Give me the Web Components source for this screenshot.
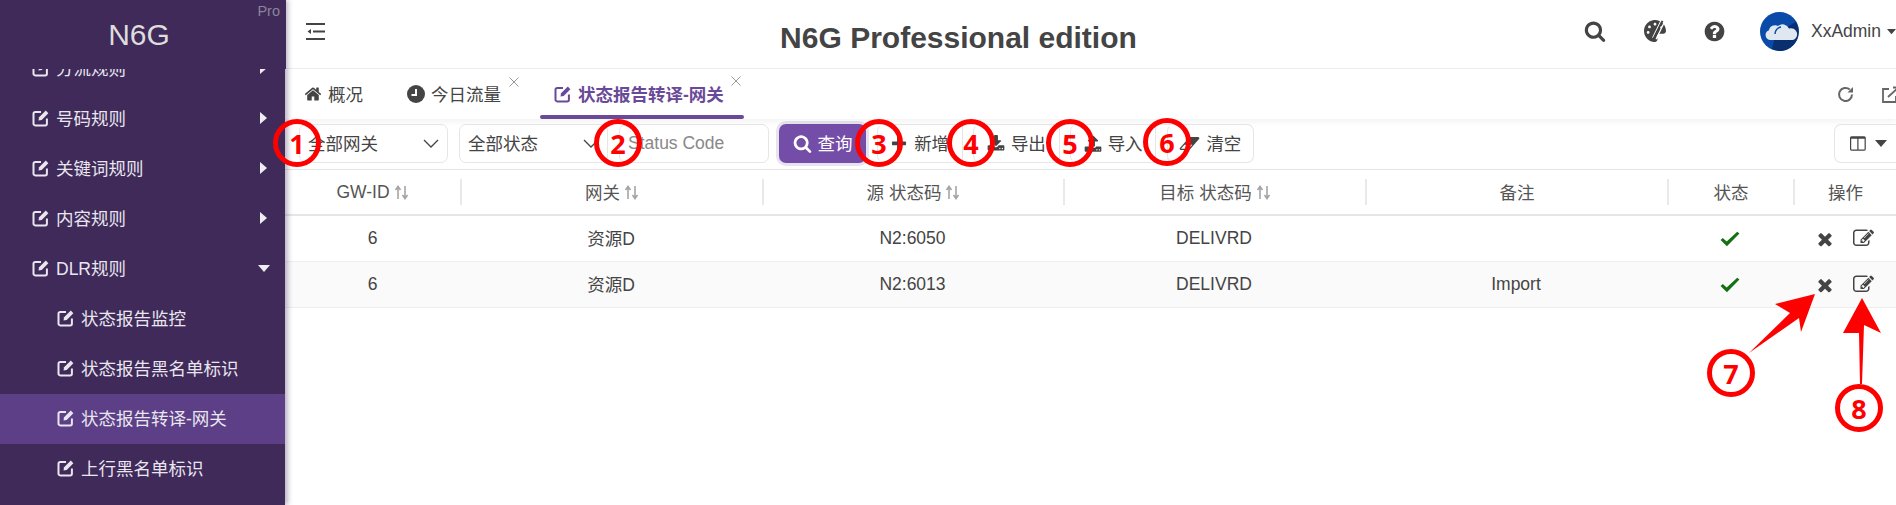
<!DOCTYPE html>
<html><head><meta charset="utf-8"><style>
html,body{margin:0;padding:0;height:505px;overflow:hidden;background:#fff}
body{font:17.5px "Liberation Sans","Noto Sans CJK SC",sans-serif;color:#444}
app-shell{display:flex}
</style></head><body>
<app-shell>
 <side-nav></side-nav>
 <main-pane></main-pane>
</app-shell>
<call-outs></call-outs>
<script>
const P={
edit:['0 0 1792 1792','M888 1184l116-116-152-152-116 116v56h96v96h56zm440-720q-16-16-33 1l-350 350q-17 17-1 33t33-1l350-350q17-17 1-33zm80 594v190q0 119-84.500 203.500t-203.500 84.500h-832q-119 0-203.500-84.500t-84.500-203.500v-832q0-119 84.500-203.500t203.500-84.500h832q63 0 117 25 15 7 18 23 3 17-9 29l-49 49q-14 14-32 8-23-6-45-6h-832q-66 0-113 47t-47 113v832q0 66 47 113t113 47h832q66 0 113-47t47-113v-126q0-13 9-22l64-64q15-15 35-7t20 29zm-96-738l288 288-672 672h-288v-288zm444 132l-92 92-288-288 92-92q28-28 68-28t68 28l152 152q28 28 28 68t-28 68z'],
search:['0 0 1792 1792','M1216 832q0-185-131.500-316.500t-316.500-131.500-316.500 131.500-131.500 316.500 131.500 316.500 316.500 131.500 316.500-131.500 131.500-316.500zm512 832q0 52-38 90t-90 38q-54 0-90-38l-343-342q-179 124-399 124-143 0-273.500-55.500t-225-150-150-225-55.500-273.500 55.500-273.500 150-225 225-150 273.500-55.500 273.500 55.500 225 150 150 225 55.500 273.500q0 220-124 399l343 343q37 37 37 90z'],
times:['0 0 1792 1792','M1490 1322q0 40-28 68l-136 136q-28 28-68 28t-68-28l-294-294-294 294q-28 28-68 28t-68-28l-136-136q-28-28-28-68t28-68l294-294-294-294q-28-28-28-68t28-68l136-136q28-28 68-28t68 28l294 294 294-294q28-28 68-28t68 28l136 136q28 28 28 68t-28 68l-294 294 294 294q28 28 28 68z'],
help:['0 0 1792 1792','M1024 1376v-192q0-14-9-23t-23-9h-192q-14 0-23 9t-9 23v192q0 14 9 23t23 9h192q14 0 23-9t9-23zm256-672q0-88-55.500-163t-138.500-116-170-41q-243 0-371 213-15 24 8 42l132 100q7 6 19 6 16 0 25-12 53-68 86-92 34-24 86-24 48 0 85.500 26t37.500 59q0 38-20 61t-68 45q-63 28-115.500 86.500t-52.500 125.500v36q0 14 9 23t23 9h192q14 0 23-9t9-23q0-19 21.500-49.500t54.500-49.500q32-18 49-28.500t46-35 44.500-48 28-60.500 12.500-81zm384 192q0 209-103 385.500t-279.500 279.500-385.500 103-385.500-103-279.500-279.500-103-385.500 103-385.500 279.500-279.500 385.500-103 385.500 103 279.500 279.500 103 385.500z'],
home:['0 0 1792 1792','M1472 992v480q0 26-19 45t-45 19h-384v-384h-256v384h-384q-26 0-45-19t-19-45v-480q0-1 .5-3t.5-3l575-474 575 474q1 2 1 6zm223-69l-62 74q-8 9-21 11h-3q-13 0-21-7l-692-577-692 577q-12 8-24 7-13-2-21-11l-62-74q-8-10-7-23.500t11-21.500l719-599q32-26 76-26t76 26l244 204v-195q0-14 9-23t23-9h192q14 0 23 9t9 23v408l219 182q10 8 11 21.500t-7 23.500z'],
plus:['0 0 1792 1792','M1600 736v192q0 40-28 68t-68 28h-416v416q0 40-28 68t-68 28h-192q-40 0-68-28t-28-68v-416h-416q-40 0-68-28t-28-68v-192q0-40 28-68t68-28h416v-416q0-40 28-68t68-28h192q40 0 68 28t28 68v416h416q40 0 68 28t28 68z'],
download:['0 0 1792 1792','M1344 1344q0-26-19-45t-45-19-45 19-19 45 19 45 45 19 45-19 19-45zm256 0q0-26-19-45t-45-19-45 19-19 45 19 45 45 19 45-19 19-45zm128-224v320q0 40-28 68t-68 28h-1472q-40 0-68-28t-28-68v-320q0-40 28-68t68-28h465l135 136q58 56 136 56t136-56l136-136h464q40 0 68 28t28 68zm-325-569q17 41-14 70l-448 448q-18 19-45 19t-45-19l-448-448q-31-29-14-70 17-39 59-39h256v-448q0-26 19-45t45-19h256q26 0 45 19t19 45v448h256q42 0 59 39z'],
upload:['0 0 1792 1792','M1344 1472q0-26-19-45t-45-19-45 19-19 45 19 45 45 19 45-19 19-45zm256 0q0-26-19-45t-45-19-45 19-19 45 19 45 45 19 45-19 19-45zm128-224v320q0 40-28 68t-68 28h-1472q-40 0-68-28t-28-68v-320q0-40 28-68t68-28h427q21 56 70.500 92t110.500 36h256q61 0 110.500-36t70.500-92h427q40 0 68 28t28 68zm-325-648q-17 40-59 40h-256v448q0 26-19 45t-45 19h-256q-26 0-45-19t-19-45v-448h-256q-42 0-59-40-17-39 14-69l448-448q18-19 45-19t45 19l448 448q31 30 14 69z'],
eraser:['0 0 2048 1792','M960 1408l336-384h-768l-336 384h768zm1013-1077q15 34 9.500 71.500t-30.500 65.500l-896 1024q-38 44-96 44h-768q-38 0-69.500-20.500t-47.500-54.500q-15-34-9.500-71.500t30.500-65.500l896-1024q38-44 96-44h768q38 0 70 20.500t47 54.500z'],
columns:['0 0 1792 1792','M160 1536h608v-1152h-640v1120q0 13 9.500 22.500t22.500 9.500zm1376-32v-1120h-640v1152h608q13 0 22.500-9.500t9.500-22.500zm128-1216v1216q0 66-47 113t-113 47h-1344q-66 0-113-47t-47-113v-1216q0-66 47-113t113-47h1344q66 0 113 47t47 113z'],
palette:['0 0 512 512','M204.3 5C104.9 24.4 24.8 104.3 5.2 203.4c-37 187 131.700 326.400 258.800 306.700 41.200-6.400 61.400-54.600 42.500-91.700-23.100-45.400 9.900-98.400 60.900-98.400h79.700c35.800 0 64.800-29.600 64.900-65.300C511.500 97.100 368.100-26.900 204.300 5zM96 320c-17.700 0-32-14.300-32-32s14.300-32 32-32 32 14.300 32 32-14.300 32-32 32zm32-128c-17.700 0-32-14.300-32-32s14.300-32 32-32 32 14.300 32 32-14.300 32-32 32zm128-64c-17.700 0-32-14.300-32-32s14.300-32 32-32 32 14.300 32 32-14.300 32-32 32zm128 64c-17.700 0-32-14.300-32-32s14.300-32 32-32 32 14.300 32 32-14.300 32-32 32z']
};
const BOXED='<svg width="18" height="18" viewBox="0 0 18 18" style="flex:none;display:block"><path d="M9 3H3.200A1.700 1.700 0 0 0 1.500 4.700v10a1.700 1.700 0 0 0 1.700 1.700h10a1.700 1.700 0 0 0 1.700-1.700V9.500" fill="none" stroke="currentColor" stroke-width="2"/><path d="M6.500 11.500l.6-3.200L13.800 1.600l2.600 2.600L9.700 10.900z" fill="currentColor"/></svg>';
class UIcon extends HTMLElement{
 connectedCallback(){
  const n=this.getAttribute('name'),s=this.getAttribute('size')||16,[v,d]=P[n];
  this.attachShadow({mode:'open'}).innerHTML=`<style>:host{display:inline-flex;flex:none;width:${s}px;height:${s}px;color:inherit}svg{width:100%;height:100%;display:block;overflow:visible}</style><svg viewBox="${v}" fill="currentColor"><path d="${d}"/></svg>`;
 }
}
customElements.define('u-icon',UIcon);

class SideNav extends HTMLElement{
 constructor(){super();
  const tri='<svg width="9" height="14" viewBox="0 0 9 14"><path d="M1 1l7 6-7 6z" fill="#eee"/></svg>';
  const down='<svg width="14" height="9" viewBox="0 0 14 9" style="margin-left:-2px"><path d="M1 1h12l-6 7z" fill="#eee"/></svg>';
  const it=(t,o={})=>`<div class="it ${o.sub?'sub':''} ${o.on?'on':''}">${BOXED}<span>${t}</span>${o.c?`<i>${o.c}</i>`:''}</div>`;
  this.attachShadow({mode:'open'}).innerHTML=`<style>
  :host{display:block;flex:none;width:285px;height:505px;background:#3f2a5a;color:#e9e6ef;box-shadow:3px 0 5px rgba(60,40,90,.35);position:relative;z-index:2}
  .brand{height:69px;position:relative;display:flex;align-items:center;justify-content:center;padding-right:8px;box-sizing:border-box;background:#3f2a5a;z-index:1;font-size:30px;color:#ddd;width:286px}
  .pro{position:absolute;right:6px;top:3px;font-size:14.500px;color:#8d8499}
  .menu{margin-top:-25px;overflow:hidden}
  .it{height:50px;display:flex;align-items:center;gap:6px;padding-left:32px;position:relative}
  .it svg{margin-top:-2px}
  .it span{padding-bottom:3px}
  .it.sub{padding-left:57px}.it.on{background:#5c3f87}
  .it i{position:absolute;left:259px;top:0;bottom:0;display:flex;align-items:center}
  </style>
  <div class="brand">N6G<span class="pro">Pro</span></div>
  <div class="menu">
  ${it('分流规则',{c:tri})}${it('号码规则',{c:tri})}${it('关键词规则',{c:tri})}${it('内容规则',{c:tri})}${it('DLR规则',{c:down})}
  ${it('状态报告监控',{sub:1})}${it('状态报告黑名单标识',{sub:1})}${it('状态报告转译-网关',{sub:1,on:1})}${it('上行黑名单标识',{sub:1})}
  </div>`;
 }
}
customElements.define('side-nav',SideNav);

class TopBar extends HTMLElement{
 constructor(){super();
  this.attachShadow({mode:'open'}).innerHTML=`<style>
  :host{display:flex;align-items:center;height:68px;border-bottom:1px solid #eee;position:relative;flex:none}
  .ham{margin-left:21px;width:19px;height:17px;flex:none;margin-top:-6px}
  h1{flex:1;margin:0;text-align:center;font-size:30px;font-weight:bold;color:#444;padding-top:8px;padding-left:8px;box-sizing:border-box}
  .r{display:flex;align-items:center;flex:none;color:#444;margin-top:-6px}
  .name{margin-left:12px;white-space:nowrap}
  .av{width:39px;height:39px;margin-left:34px;flex:none;display:block}
  .car{margin-left:6px;width:9px;overflow:hidden;flex:none;display:block}
  </style>
  <svg class="ham" viewBox="0 0 19 17"><path d="M0 1h19M7 8.500h12M0 16h19" stroke="#444" stroke-width="2" fill="none"/><path d="M5 6v5l-3.500-2.500z" fill="#444"/></svg>
  <h1>N6G Professional edition</h1>
  <div class="r">
   <u-icon name="search" size="22"></u-icon>
   <svg width="22" height="22" viewBox="0 0 512 512" style="margin-left:38px" fill="#444"><path d="${P.palette[1]}"/><path d="M390 30L200 420M470 60L280 450" stroke="#fff" stroke-width="30" fill="none"/><path d="M430 20L240 400" stroke="#444" stroke-width="46"/><path d="M240 400l-40 90" stroke="#444" stroke-width="60"/></svg>
   <u-icon name="help" size="23" style="margin-left:37px"></u-icon>
   <svg class="av" viewBox="0 0 39 39"><circle cx="19.500" cy="19.500" r="19.500" fill="#0a4aa8"/><path d="M16 21L36 10a19.500 19.500 0 0 1-14 29A19.500 19.500 0 0 1 12 37z" fill="#0a2f6e"/><path d="M10 28a5 5 0 0 1-1-9.700 6 6 0 0 1 9-4.300 7 7 0 0 1 11 2.500 6 6 0 0 1 4 11.500z" fill="#dfe7f1"/><path d="M15 22a7 7 0 0 1 6-7" stroke="#0a4aa8" stroke-width="1.500" fill="none"/></svg>
   <span class="name">XxAdmin</span>
   <svg class="car" height="7" viewBox="0 0 12 7"><path d="M0 0h12l-6 7z" fill="#444"/></svg>
  </div>`;
 }
}
customElements.define('top-bar',TopBar);

class TabBar extends HTMLElement{
 constructor(){super();
  const x=(l,t)=>`<svg class="x" style="left:${l}px;top:${t}px" width="10" height="10" viewBox="0 0 10 10"><path d="M.5.500l9 9M9.500.500l-9 9" stroke="#999" fill="none"/></svg>`;
  this.attachShadow({mode:'open'}).innerHTML=`<style>
  :host{display:flex;align-items:center;height:50px;position:relative;flex:none;padding-left:19px;box-shadow:0 3px 6px rgba(0,0,0,.05);z-index:1;background:#fff}
  .t{display:flex;align-items:center;gap:6px;height:100%;position:relative;box-sizing:border-box;white-space:nowrap}
  .t span{padding-bottom:2px}
  .a{color:#6a4a98;font-weight:bold}
  .a::after{content:"";position:absolute;left:0;right:0;bottom:0;height:4px;border-radius:2px;background:#6a4a98}
  .x{position:absolute}
  .right{margin-left:auto;display:flex;align-items:center;gap:28px;width:59px;flex:none;color:#666}
  </style>
  <div class="t" style="width:103px"><u-icon name="home" size="18"></u-icon><span>概况</span></div>
  <div class="t" style="width:133px"><svg width="18" height="18" viewBox="0 0 18 18"><circle cx="9" cy="9" r="9" fill="#444"/><path d="M9 4v6H4.500" stroke="#fff" stroke-width="2" fill="none"/></svg><span>今日流量</span>${x(102,8)}</div>
  <div class="t a" style="width:204px;padding-left:14px">${BOXED}<span>状态报告转译-网关</span>${x(191,7)}</div>
  <div class="right">
   <svg width="17" height="17" viewBox="0 0 17 17" fill="none" style="flex:none"><path d="M15 8.500A6.500 6.500 0 1 1 12.800 3.600" stroke="#666" stroke-width="2"/><path d="M16 1v5.500h-5.500z" fill="#666"/></svg>
   <svg width="18" height="17" viewBox="0 0 18 17" fill="none" style="flex:none"><path d="M7 3H1v13h13v-6" stroke="#666" stroke-width="1.800"/><path d="M6 11L16 2M11 1.500h6v6" stroke="#666" stroke-width="1.800"/></svg>
  </div>`;
 }
}
customElements.define('tab-bar',TabBar);

class FilterBar extends HTMLElement{
 constructor(){super();
  const chev='<svg width="16" height="9" viewBox="0 0 16 9"><path d="M1 1l7 7 7-7" stroke="#444" stroke-width="1.300" fill="none"/></svg>';
  const b=(n,t,s=18)=>`<div class="b"><u-icon name="${n}" size="${s}"></u-icon><span>${t}</span></div>`;
  this.attachShadow({mode:'open'}).innerHTML=`<style>
  :host{display:flex;align-items:center;height:39px;padding:5px 0 6px 14px;border-bottom:1px solid #e4e4e4;flex:none}
  span{padding-bottom:2px}
  .f{height:39px;box-sizing:border-box;border:1px solid #e6e6e6;border-radius:7px;display:flex;align-items:center;flex:none}
  .s{width:149px;padding:0 8px;justify-content:space-between;margin-right:11px}
  .in{width:150px;margin-left:11px;color:#888;padding-left:8px;margin-right:10px}
  .q{height:39px;width:87px;box-sizing:border-box;background:#744da9;color:#fff;border-radius:7px;display:flex;align-items:center;justify-content:center;gap:6px;box-shadow:0 0 0 3px #e8e3f1;flex:none}
  .g{display:flex;height:39px;box-sizing:border-box;border:1px solid #e6e6e6;border-left:0;border-radius:0 7px 7px 0;flex:none;width:388px}
  .b{width:86.500px;margin-left:10.500px;margin-top:-1px;margin-bottom:-1px;display:flex;align-items:center;justify-content:center;gap:6px;box-sizing:border-box;border:1px solid #e6e6e6;border-top-left-radius:7px;border-bottom-left-radius:7px;border-top-color:transparent;border-bottom-color:transparent;white-space:nowrap}
  .b:last-child{border-right:0}
  .c{margin-left:auto;width:62px;display:flex;align-items:center;gap:8px;padding-left:15px;border-right:0;border-radius:7px 0 0 7px;justify-content:flex-start}
  </style>
  <div class="f s"><span>全部网关</span>${chev}</div>
  <div class="f s" style="margin-right:0"><span>全部状态</span>${chev}</div>
  <div class="f in">Status Code</div>
  <div class="q"><u-icon name="search" size="19"></u-icon><span>查询</span></div>
  <div class="g">${b('plus','新增')}${b('download','导出')}${b('upload','导入')}${b('eraser','清空',21)}</div>
  <div class="f c"><u-icon name="columns" size="17"></u-icon><svg width="12" height="7" viewBox="0 0 12 7"><path d="M0 0h12l-6 7z" fill="#444"/></svg></div>`;
 }
}
customElements.define('filter-bar',FilterBar);

class DataTable extends HTMLElement{
 constructor(){super();
  const sort='<svg class="so" width="15" height="15" viewBox="0 0 15 15"><path d="M4 14V2M1.500 5L4 1.500 6.500 5M11 1v12M8.500 10l2.500 3.500 2.500-3.500" stroke="#a5a5a5" stroke-width="1.600" fill="none"/></svg>';
  const hd=[['GW-ID',1],['<span>网关</span>',1],['<span>源 状态码</span>',1],['<span>目标 状态码</span>',1],['<span>备注</span>'],['<span>状态</span>'],['<span>操作</span>']];
  const ok='<svg width="20" height="16" viewBox="0 0 18 14"><path d="M0.500 8l2-2 3.500 3.300L15.500.5l2 1.500L6.200 13.500z" fill="#147014"/></svg>';
  const row=(c,n,e)=>`<div class="r ${e?'e':''}"><div>6</div><div><span>资源D</span></div><div>${c}</div><div>DELIVRD</div><div>${n}</div><div>${ok}</div><div class="op"><u-icon name="times" size="20"></u-icon><u-icon name="edit" size="21"></u-icon></div></div>`;
  this.attachShadow({mode:'open'}).innerHTML=`<style>
  :host{display:block;flex:none}
  span{padding-bottom:2px}
  .r{display:grid;grid-template-columns:175px 302px 301px 302px 302px 126px 1fr;height:46px;box-sizing:border-box;border-bottom:1px solid #eee;align-items:center;text-align:center}
  .r>div{display:flex;align-items:center;justify-content:center;gap:4px}
  .h{border-bottom:2px solid #e6e6e6;color:#555}
  .h>div{height:26px}
  .h>div+div{border-left:2px solid #e9e9e9;box-sizing:border-box}
  .e{background:#fafafa}
  .op{gap:18px!important}
  </style>
  <div class="r h">${hd.map(h=>`<div>${h[0]}${h[1]?sort:''}</div>`).join('')}</div>
  ${row('N2:6050','')}${row('N2:6013','Import',1)}`;
 }
}
customElements.define('data-table',DataTable);

class MainPane extends HTMLElement{
 constructor(){super();
  this.attachShadow({mode:'open'}).innerHTML=`<style>:host{display:flex;flex-direction:column;flex:1;min-width:0;height:505px;overflow:hidden}</style>
  <top-bar></top-bar><tab-bar></tab-bar><filter-bar></filter-bar><data-table></data-table>`;
 }
}
customElements.define('main-pane',MainPane);

class AppShell extends HTMLElement{
 constructor(){super();this.attachShadow({mode:'open'}).innerHTML=`<style>:host{display:flex;width:1896px;height:505px}</style><slot></slot>`;}
}
customElements.define('app-shell',AppShell);

class CallOuts extends HTMLElement{
 constructor(){super();
  const m=[[297,143,1],[618,143,2],[879,143,3],[971,143,4],[1070,143,5],[1167,142,6],[1731,373,7],[1859,408,8]];
  this.attachShadow({mode:'open'}).innerHTML=`<style>
  :host{position:absolute;left:0;top:0;width:1896px;height:505px;pointer-events:none;z-index:5;display:block}
  .m{position:absolute;width:48px;height:48px;box-sizing:border-box;border:5.500px solid #f00;border-radius:50%;color:#f00;font:bold 27px "Open Sans",sans-serif;display:flex;align-items:center;justify-content:center;transform:translate(-50%,-50%)}
  svg{position:absolute;left:0;top:0}
  </style>
  <svg width="1896" height="505"><path d="M1749 353L1790 313 1775 304 1815 294 1801 332 1799 318Z" fill="#f00"/><path d="M1860 384L1859 333 1843 333 1862 298 1881 333 1864 325 1862 384Z" fill="#f00"/></svg>
  ${m.map(a=>`<div class="m" style="left:${a[0]}px;top:${a[1]}px">${a[2]}</div>`).join('')}`;
 }
}
customElements.define('call-outs',CallOuts);
</script>
</body></html>
